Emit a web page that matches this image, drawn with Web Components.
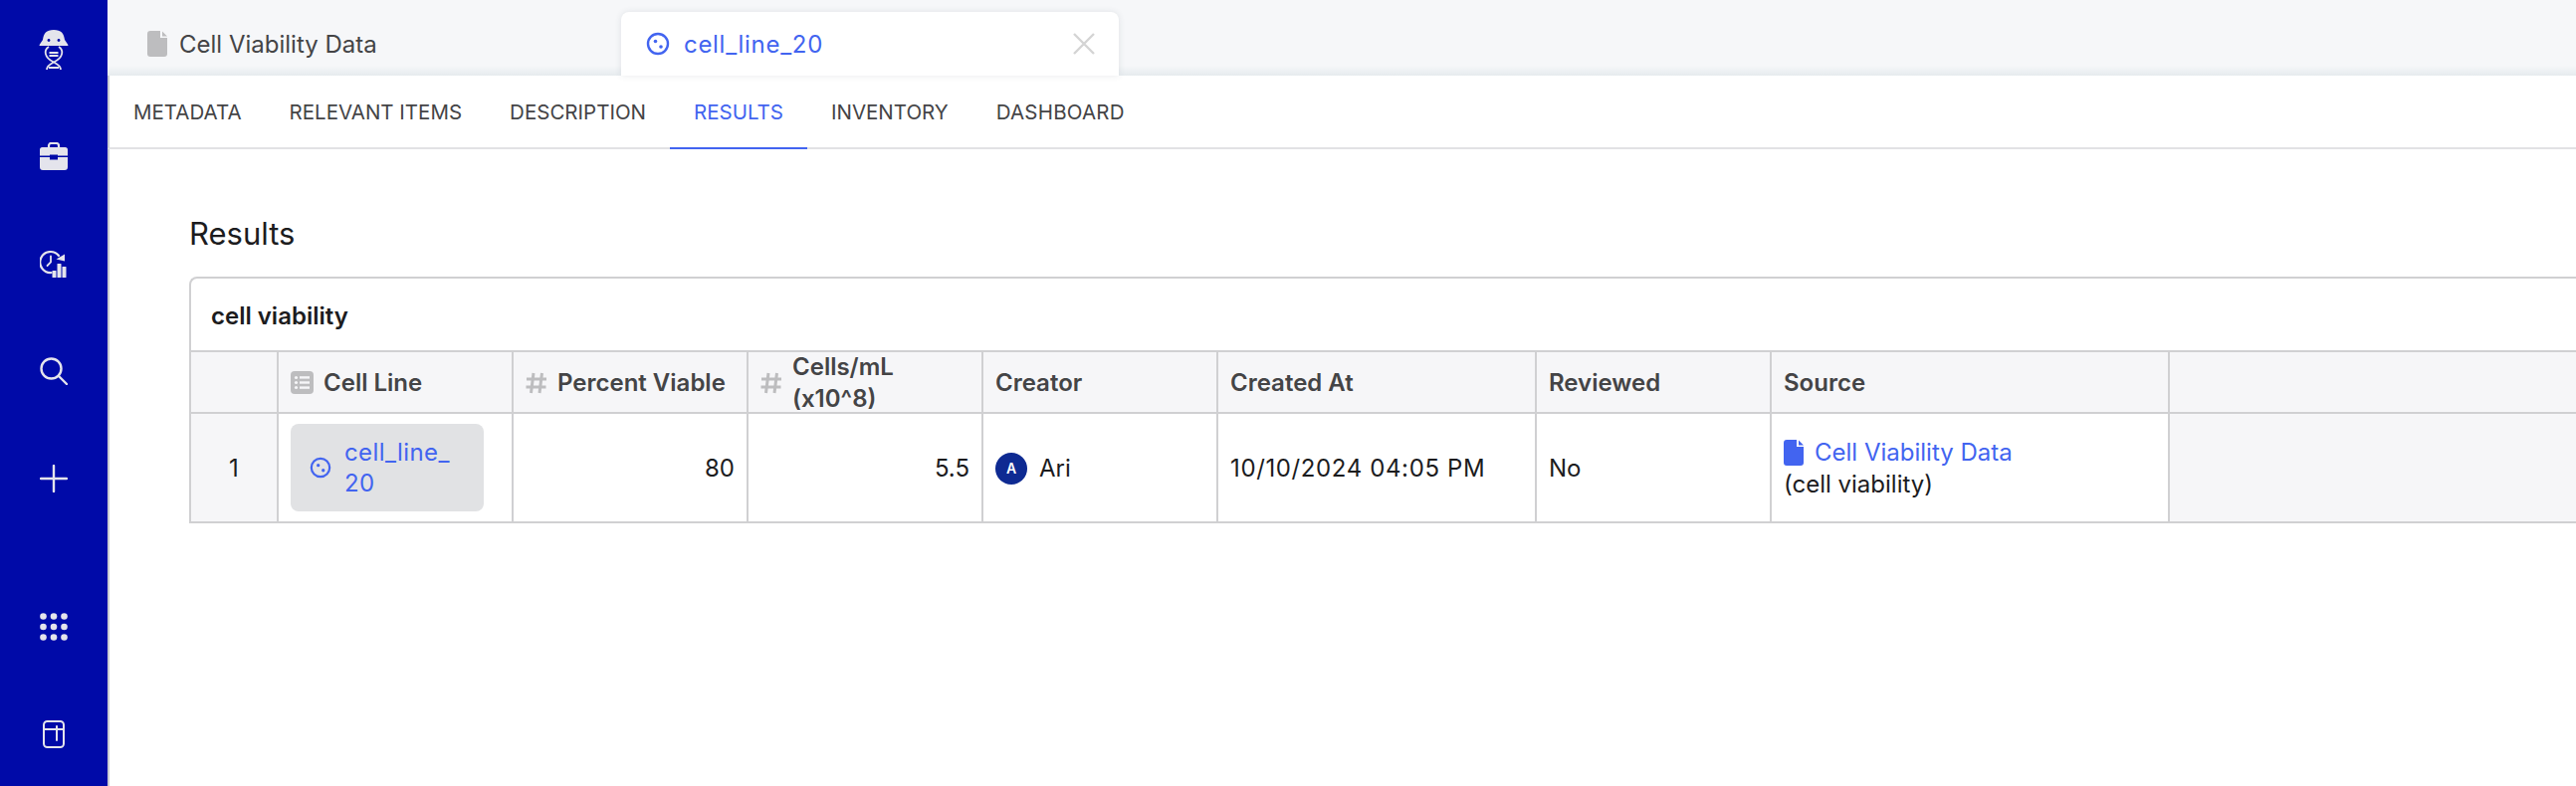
<!DOCTYPE html>
<html><head><meta charset="utf-8"><title>cell_line_20</title>
<style>
html,body{margin:0;padding:0;height:100%;overflow:hidden;background:#fff}
body{font:24px Inter,"Liberation Sans",sans-serif;color:#1c1c1e}
</style></head><body>
<app-shell>
  <side-nav slot="side"></side-nav>
  <tab-strip slot="main"></tab-strip>
  <sub-nav slot="main"></sub-nav>
  <results-panel slot="main"></results-panel>
</app-shell>
<script>
const cellIcon=(s,c)=>`<svg width="${s}" height="${s}" viewBox="0 0 24 24" fill="none" style="flex:none;display:block"><circle cx="12" cy="12" r="10" stroke="${c}" stroke-width="2.4"/><circle cx="9.5" cy="9.5" r="1.8" fill="${c}"/><circle cx="15" cy="15" r="1.8" fill="${c}"/></svg>`;
const docIcon=(w,h,c)=>`<svg width="${w}" height="${h}" viewBox="0 0 20 26" style="flex:none;display:block"><path fill="${c}" d="M3 0H13V7H20V23A3 3 0 0 1 17 26H3A3 3 0 0 1 0 23V3A3 3 0 0 1 3 0Z"/><path fill="${c}" d="M15 .5L20 5.5H15Z"/></svg>`;
const hashIcon=`<svg width="22" height="22" viewBox="0 0 22 22" fill="none" stroke="#bdbdbf" stroke-width="3" style="flex:none;display:block"><path d="M8 1L5.500 21M16.500 1L14 21M1 7H21M.5 15H20.500"/></svg>`;
const listIcon=`<svg width="23" height="23" viewBox="0 0 23 23" style="flex:none;display:block"><rect width="23" height="23" rx="4" fill="#bdbdbf"/><g fill="#f6f6f8"><circle cx="5.500" cy="6.500" r="1.600"/><circle cx="5.500" cy="11.500" r="1.600"/><circle cx="5.500" cy="16.500" r="1.600"/><rect x="9" y="5.200" width="10" height="2.400"/><rect x="9" y="10.300" width="10" height="2.400"/><rect x="9" y="15.400" width="10" height="2.400"/></g></svg>`;

function def(name,css,html){
  customElements.define(name,class extends HTMLElement{
    constructor(){super();const r=this.attachShadow({mode:'open'});r.innerHTML=`<style>${css}</style>${html}`;}
  });
}

def('app-shell',`
:host{display:flex;width:2588px;height:790px;overflow:hidden;background:#fff}
.s{flex:none}
.m{flex:1;min-width:0;display:flex;flex-direction:column}
`,`<div class="s"><slot name="side"></slot></div><div class="m"><slot name="main"></slot></div>`);

const ic='#e4e4ec';
def('side-nav',`
:host{display:flex;flex-direction:column;align-items:center;width:108px;height:790px;background:#000aa8;box-sizing:border-box}
.slot{height:108px;display:flex;align-items:center;justify-content:center;flex:none}
.logo{height:103px;align-items:flex-start;padding-top:30px;box-sizing:border-box}
.grid{margin-top:41px}
svg{display:block}
`,`
<div class="slot logo"><svg width="30" height="40" viewBox="0 0 30 40" fill="none">
  <path fill="${ic}" d="M15 0C7.500 0 4.800 3.500 4 10L.8 14.800C.3 15.600 .6 16 1.300 16H28.700C29.400 16 29.700 15.600 29.200 14.800L26 10C25.200 3.500 22.500 0 15 0Z"/>
  <circle cx="10" cy="10.500" r="1.400" fill="#000aa8"/><circle cx="20" cy="10.500" r="1.400" fill="#000aa8"/>
  <path stroke="${ic}" stroke-width="1.800" d="M10 17C5 20 5 28 15 32.500C20 35 22 37 22 40M20 17C25 20 25 28 15 32.500C10 35 8 37 8 40M10.500 23H19.500M10.500 26H19.500M10 38H20"/>
</svg></div>
<div class="slot"><svg width="28" height="28" viewBox="0 0 28 28" fill="none">
  <path stroke="${ic}" stroke-width="2.200" d="M9 6V3.500C9 2 10 1 11.500 1H16.500C18 1 19 2 19 3.500V6"/>
  <path fill="${ic}" d="M2.500 5H25.500A2.500 2.500 0 0 1 28 7.500V13.500H18V12.500H10V13.500H0V7.500A2.500 2.500 0 0 1 2.500 5Z"/>
  <path fill="${ic}" d="M0 15H10V17.500H18V15H28V25A3 3 0 0 1 25 28H3A3 3 0 0 1 0 25Z"/>
</svg></div>
<div class="slot"><svg width="28" height="28" viewBox="0 0 28 28" fill="none">
  <path stroke="${ic}" stroke-width="2.200" stroke-linecap="round" d="M19 6A10.500 10.500 0 1 0 11.500 23"/>
  <path stroke="${ic}" stroke-width="1.800" stroke-linecap="round" d="M11 6.500V12.500L7.500 16"/>
  <path fill="${ic}" d="M16.500 9.500L25 4.500V11.500Z"/>
  <rect x="12.500" y="21" width="4" height="7" rx=".6" fill="${ic}"/><rect x="17.500" y="14" width="4" height="14" rx=".6" fill="${ic}"/><rect x="22.500" y="17" width="4" height="11" rx=".6" fill="${ic}"/>
</svg></div>
<div class="slot"><svg width="28" height="28" viewBox="0 0 28 28" fill="none" stroke="${ic}" stroke-width="2.400" stroke-linecap="round">
  <circle cx="11.500" cy="11.500" r="10"/><path d="M19 19L27 27"/>
</svg></div>
<div class="slot"><svg width="28" height="28" viewBox="0 0 28 28" fill="none" stroke="${ic}" stroke-width="2.400" stroke-linecap="round"><path d="M14 1V27M1 14H27"/></svg></div>
<div class="slot grid"><svg width="28" height="28" viewBox="0 0 28 28" fill="${ic}">
  ${[3.5,14,24.5].map(y=>[3.5,14,24.5].map(x=>`<circle cx="${x}" cy="${y}" r="3.300"/>`).join('')).join('')}
</svg></div>
<div class="slot"><svg width="22" height="28" viewBox="0 0 22 28" fill="none" stroke="${ic}" stroke-width="2" stroke-linecap="round">
  <rect x="1" y="1" width="20" height="26" rx="3.500"/><path d="M1 9H21M14 6V20"/>
</svg></div>`);

def('tab-strip',`
:host{display:flex;flex:none;height:76px;box-sizing:border-box;background:linear-gradient(#f6f7f9 0,#f6f7f9 66px,#e6ebee 76px);align-items:flex-end}
.tab{display:flex;align-items:center;height:64px;box-sizing:border-box;white-space:nowrap;flex:none}
.a{width:516px;padding-left:40px;gap:12px;color:#444446}
.b{width:500px;padding:0 24px 0 25px;gap:14px;color:#4264f0;background:#fff;border-radius:8px 8px 0 0;box-shadow:0 0 6px rgba(60,70,90,.12)}
.t{flex:1;letter-spacing:.7px}
svg{display:block}
`,`
<div class="tab a">${docIcon(20,26,'#bdbdbf')}<span>Cell Viability Data</span></div>
<div class="tab b">${cellIcon(24,'#4264f0')}<span class="t">cell_line_20</span>
<svg width="22" height="22" viewBox="0 0 22 22" fill="none" stroke="#d4d4d4" stroke-width="2.400"><path d="M1 1L21 21M21 1L1 21"/></svg></div>`);

def('sub-nav',`
:host{display:flex;flex:none;height:74px;box-sizing:border-box;border-bottom:2px solid #e2e2e4;border-left:2px solid #c9cbd2;font-size:20.5px;color:#444446}
.i{display:flex;align-items:center;padding:0 24px;margin-bottom:-2px;border-bottom:2px solid transparent}
.on{color:#4264f0;border-bottom-color:#4264f0}
`,`<div class="i">METADATA</div><div class="i">RELEVANT ITEMS</div><div class="i">DESCRIPTION</div><div class="i on">RESULTS</div><div class="i">INVENTORY</div><div class="i" style="letter-spacing:.2px">DASHBOARD</div>`);

def('results-panel',`
:host{display:block;flex:1;border-left:2px solid #c9cbd2;padding:0 0 0 80px;box-sizing:border-box;overflow:hidden}
h2{margin:0;height:128px;box-sizing:border-box;padding-top:65px;font:400 31px/40px Inter,sans-serif;color:#1c1c1e}
`,`<h2>Results</h2><data-card></data-card>`);

def('data-card',`
:host{display:block;width:2400px;border:2px solid #d0d0d2;border-right:0;border-top-left-radius:8px;box-sizing:border-box}
.title{height:72px;box-sizing:content-box;display:flex;align-items:center;padding-left:20px;font-weight:600;color:#1c1c1e;border-bottom:2px solid #d0d0d2}
.title span{padding-top:2px}
.g{display:grid;grid-template-columns:88px repeat(4,236px) 320px 236px 400px 1fr;grid-template-rows:62px 108px}
.c{box-sizing:border-box;border-right:2px solid #d0d0d2;padding:1px 12px 0;display:flex;align-items:center;min-width:0;white-space:nowrap}
.h{background:#f6f6f8;border-bottom:2px solid #d0d0d2;font-weight:600;color:#444446;gap:10px}
.n{background:#f6f6f8;justify-content:center;padding:1px 0 0}
.f{background:#f6f6f8;border-right:0}
.r{justify-content:flex-end}
.two{line-height:32px}
.chip{display:flex;align-items:center;gap:13px;width:194px;height:88px;flex:none;box-sizing:border-box;padding-left:19px;border-radius:8px;background:#e1e2e4;color:#4264f0;line-height:31px;white-space:normal;margin-top:-1px}
.chip span{width:124px;letter-spacing:.4px}
.av{width:32px;height:32px;border-radius:50%;background:#0e2a92;color:#fff;font-size:14px;font-weight:600;display:flex;align-items:center;justify-content:center;margin-right:12px;flex:none}
.src{display:block;line-height:32px}
.l{display:flex;align-items:center;gap:11px;color:#4264f0;height:32px}
.d{letter-spacing:.62px}
`,`
<div class="title"><span>cell viability</span></div>
<div class="g">
 <div class="c h"></div>
 <div class="c h">${listIcon}<span>Cell Line</span></div>
 <div class="c h">${hashIcon}<span>Percent Viable</span></div>
 <div class="c h">${hashIcon}<span class="two">Cells/mL<br>(x10^8)</span></div>
 <div class="c h">Creator</div>
 <div class="c h">Created At</div>
 <div class="c h">Reviewed</div>
 <div class="c h">Source</div>
 <div class="c h f"></div>
 <div class="c n">1</div>
 <div class="c"><div class="chip">${cellIcon(22,'#4264f0')}<span>cell_line_<wbr>20</span></div></div>
 <div class="c r">80</div>
 <div class="c r">5.5</div>
 <div class="c"><div class="av">A</div>Ari</div>
 <div class="c d">10/10/2024 04:05 PM</div>
 <div class="c">No</div>
 <div class="c"><div class="src"><div class="l">${docIcon(20,26,'#4264f0')}<span>Cell Viability Data</span></div>(cell viability)</div></div>
 <div class="c f"></div>
</div>`);
</script>
</body></html>
